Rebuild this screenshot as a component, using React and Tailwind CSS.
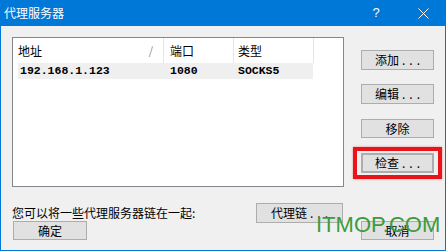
import React from "react";

const cjk = { fontFamily: '"Noto Sans CJK SC", "Noto Sans", sans-serif' };

function Btn({ label, dots, className = "" }) {
  return (
    <div
      className={
        "flex items-center justify-center bg-[#e1e1e1] border border-[#adadad] text-[12px] leading-none text-black " +
        className
      }
    >
      <span>{label}</span>
      {dots && <span className="tracking-[4px] ml-[3px] -mr-[4px]">...</span>}
    </div>
  );
}

export default function App() {
  return (
    <div
      className="relative w-[446px] h-[251px] bg-[#f0f0f0] border-x border-b border-[#0078d7] flex flex-col overflow-hidden"
      style={cjk}
    >
      {/* title bar */}
      <div className="h-[26px] bg-[#0078d7] flex items-center text-white text-[12px] pl-[3px] pr-[16px] shrink-0">
        <span>代理服务器</span>
        <div className="flex-1" />
        <span className="w-[12px] text-center text-[13px]" style={{ fontFamily: '"Liberation Sans", sans-serif' }}>?</span>
        <svg className="ml-[36px]" width="11" height="11" viewBox="0 0 11 11">
          <path d="M0.5 0.5 L10.5 10.5 M10.5 0.5 L0.5 10.5" stroke="white" strokeWidth="1" fill="none" />
        </svg>
      </div>

      {/* top section */}
      <div className="flex pl-[11px] pt-[11px]">
        <div className="w-[332px] h-[150px] border border-[#828790] bg-white flex flex-col">
          <div className="h-[25px] flex text-[12px] text-black">
            <div className="w-[151px] border-r border-[#e5e5e5] flex items-center pl-[5px] pr-[10px]">
              <span>地址</span>
              <span className="ml-auto text-[#8a8a8a] text-[11px]">/</span>
            </div>
            <div className="w-[70px] border-r border-[#e5e5e5] flex items-center pl-[6px]">端口</div>
            <div className="w-[80px] border-r border-[#e5e5e5] flex items-center pl-[4px]">类型</div>
          </div>
          <div
            className="ml-[5px] w-[295px] h-[16px] bg-[#efefef] flex items-center text-[11.5px] font-bold text-black"
            style={{ fontFamily: '"Liberation Mono", monospace' }}
          >
            <div className="w-[146px] pl-[2px]">192.168.1.123</div>
            <div className="w-[69px] pl-[6px]">1080</div>
            <div className="pl-[5px]">SOCKS5</div>
          </div>
        </div>

        <div className="ml-[17px] flex flex-col">
          <Btn label="添加" dots className="mt-[13px] w-[73px] h-[20px]" />
          <Btn label="编辑" dots className="mt-[14px] w-[73px] h-[20px]" />
          <Btn label="移除" className="mt-[15px] w-[73px] h-[19px]" />
          <div className="relative mt-[15px]">
            <Btn label="检查" dots className="w-[73px] h-[20px] border-2 border-[#0078d7]" />
            <div className="absolute -left-[8px] -right-[8px] -top-[6px] -bottom-[6px] border-4 border-[#e8141a] shadow-[0_0_2px_rgba(232,20,26,0.5)]" />
          </div>
        </div>
      </div>

      {/* bottom rows */}
      <div className="flex items-center h-[20px] mt-[16px] pl-[11px]">
        <div className="w-[244px] text-[12px] text-black">您可以将一些代理服务器链在一起:</div>
        <Btn label="代理链" dots className="w-[87px] h-[20px]" />
      </div>
      <div className="flex mt-[-2px] pl-[12px]">
        <Btn label="确定" className="w-[74px] h-[19px]" />
        <Btn label="取消" className="ml-[274px] w-[73px] h-[19px]" />
      </div>

      {/* watermark */}
      <div
        className="absolute left-[315px] top-[212px] text-[22px] leading-[25px] text-[#3d9b3d]"
        style={{ fontFamily: '"Liberation Sans", Arial, sans-serif' }}
      >
        ITMOP.COM
      </div>
    </div>
  );
}
